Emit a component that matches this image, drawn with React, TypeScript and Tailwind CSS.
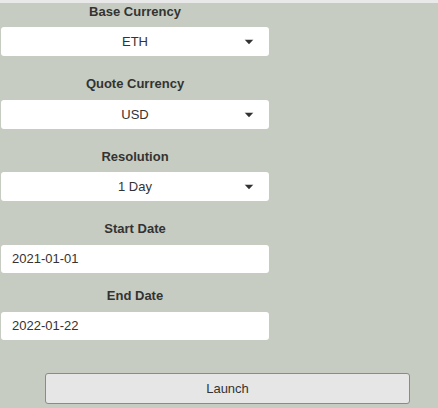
import React from "react";

function Caret() {
  return (
    <svg width="10" height="5" viewBox="0 0 10 5" className="absolute right-[15px] top-1/2 -translate-y-1/2">
      <path d="M0.5 0 L9.5 0 L5 4.8 Z" fill="#333" />
    </svg>
  );
}

function Label({ children, cls }: { children: React.ReactNode; cls: string }) {
  return (
    <div className={`text-center font-bold text-[13px] leading-[16px] text-[#333] ${cls}`}>{children}</div>
  );
}

function SelectBox({ value }: { value: string }) {
  return (
    <div className="relative h-[29px] w-[268px] ml-[1px] bg-white rounded-[3px] flex items-center justify-center text-[13px] text-[#333]">
      <span>{value}</span>
      <Caret />
    </div>
  );
}

function DateBox({ value }: { value: string }) {
  return (
    <div className="h-[28px] w-[268px] ml-[1px] bg-white rounded-[3px] flex items-center pl-[11px] text-[13px] text-[#333]">
      {value}
    </div>
  );
}

export default function App() {
  return (
    <div
      className="w-[438px] h-[408px] bg-[#c6ccc1] overflow-hidden"
      style={{ fontFamily: '"Liberation Sans", Arial, sans-serif' }}
    >
      <div className="h-[3px] bg-[#e9e9e9]" />
      <div className="w-[270px]">
        <Label cls="mt-[1px] mb-[7px]">Base Currency</Label>
        <SelectBox value="ETH" />
        <Label cls="mt-[20px] mb-[8px]">Quote Currency</Label>
        <SelectBox value="USD" />
        <Label cls="mt-[20px] mb-[7px]">Resolution</Label>
        <SelectBox value="1 Day" />
        <Label cls="mt-[20px] mb-[8px]">Start Date</Label>
        <DateBox value="2021-01-01" />
        <Label cls="mt-[15px] mb-[8px]">End Date</Label>
        <DateBox value="2022-01-22" />
      </div>
      <div className="mt-[33px] ml-[45px] w-[365px] h-[31px] bg-[#e6e6e6] border border-[#8a8a8a] rounded-[3px] flex items-center justify-center text-[13px] text-[#333]">
        Launch
      </div>
    </div>
  );
}
